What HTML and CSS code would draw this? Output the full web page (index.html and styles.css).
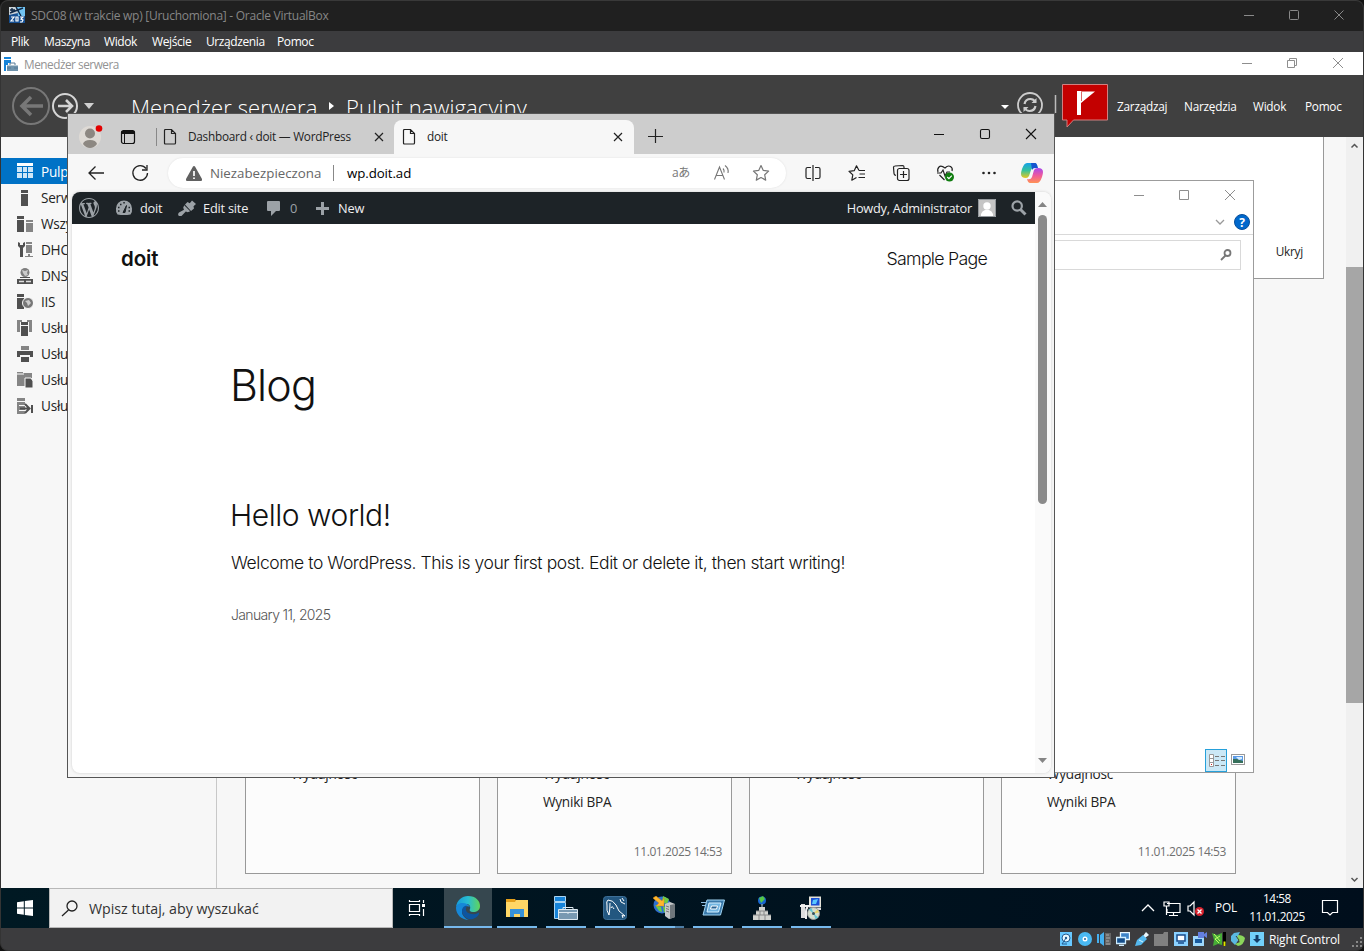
FILE: index.html
```html
<!DOCTYPE html>
<html lang="pl">
<head>
<meta charset="utf-8">
<title>SDC08 (w trakcie wp) [Uruchomiona] - Oracle VirtualBox</title>
<link rel="stylesheet" href="styles.css">
</head>
<body>
<div class="vm">
  <header class="vm-title">
    <svg class="vm-logo" viewBox="0 0 16 16"><rect width="16" height="16" fill="#164f91"/><path d="M8 0h8v9H9z" fill="#71c3f2"/><path d="M0 0h7l2 6-9 2z" fill="#cbd3d8"/><path d="M1 3h5M3 1v4M1 6l13-5M7 0l5 9" stroke="#102947" stroke-width="1.400"/><path d="M2 10h3l-3 4h3M7 10h2v4H7zM11 10h3l-2 2 2 1-1 2h-2" fill="none" stroke="#fff" stroke-width="1.200"/></svg>
    <span class="t vm-name">SDC08 (w trakcie wp) [Uruchomiona] - Oracle VirtualBox</span>
    <svg class="vm-controls" viewBox="0 0 110 12"><path d="M4 6.500h10M94.500 1.500l9 9M103.500 1.500l-9 9" stroke="#8a8a8a" fill="none"/><rect x="49.500" y="1.500" width="9" height="9" rx="1" fill="none" stroke="#8a8a8a"/></svg>
  </header>
  <nav class="vm-menu"><span>Plik</span><span>Maszyna</span><span>Widok</span><span>Wejście</span><span>Urządzenia</span><span>Pomoc</span></nav>

  <main class="guest">
    <section class="sm">
      <div class="sm-title">
        <svg class="sm-logo" viewBox="0 0 14 14"><path d="M0 0h7v2H0zM0 3h7v3H4v2H2v6H0z" fill="#1683d8"/><path d="M3 8.500h11V14H3z" fill="#6f93ac"/><path d="M6 8V6h5v2M3 11h4m3 0h4" stroke="#567b96" fill="none"/></svg>
        <span class="t">Menedżer serwera</span>
        <svg class="sm-controls" viewBox="0 0 110 12"><path d="M3 6.500h10M94 1l10 10M104 1L94 11M48.500 3.500h7v7h-7zM50.500 3V1.500h7v7H56" stroke="#8e8e8e" fill="none"/></svg>
      </div>
      <div class="sm-head">
        <svg class="sm-nav" viewBox="0 0 90 44"><circle cx="19" cy="22" r="18" fill="none" stroke="#777" stroke-width="2"/><path d="M31 22H10M19 13l-9 9 9 9" stroke="#777" stroke-width="3.500" fill="none"/><circle cx="53" cy="22" r="12" fill="none" stroke="#d5d5d5" stroke-width="2"/><path d="M46 22h13M54 16l6 6-6 6" stroke="#d5d5d5" stroke-width="2.600" fill="none"/><path d="M72 19h10l-5 6z" fill="#d0d0d0"/></svg>
        <h1 class="crumb crumb-a">Menedżer serwera</h1>
        <svg class="crumb-arrow" viewBox="0 0 6 10"><path d="M0 1l5 4-5 4z" fill="#fff"/></svg>
        <h1 class="crumb crumb-b">Pulpit nawigacyjny</h1>
        <svg class="sm-refresh" viewBox="0 0 60 30"><path d="M1 14h8l-4 4z" fill="#fff"/><circle cx="30" cy="14" r="12" fill="none" stroke="#ccc" stroke-width="1.800"/><path d="M24.500 13q1-5 6-5 3 0 5 3M35.500 15q-1 5-6 5-3 0-5-3" fill="none" stroke="#ccc" stroke-width="2.200"/><path d="M36.500 7v5h-5zM23.500 21v-5h5z" fill="#ccc"/><path d="M55.500 4v18" stroke="#bbb" stroke-width="1.500"/></svg>
        <svg class="sm-flag" viewBox="0 0 46 45"><path d="M.500 1.500h45v35.500h-34l-6.500 7v-7H.500z" fill="#c30000" stroke="#d18080"/><path d="M15 8h4v24h-4zM19 8.500h14L19 20z" fill="#fff"/><path d="M19.500 9v9" stroke="#c30000" stroke-width=".6"/></svg>
        <nav class="sm-menu"><span>Zarządzaj</span><span>Narzędzia</span><span>Widok</span><span>Pomoc</span></nav>
      </div>
      <div class="sm-body">
        <aside class="side">
          <div class="side-item on"><svg viewBox="0 0 16 16"><path d="M0 0h16v3H0z" fill="#fff"/><path d="M0 4h5v5H0zM6 4h4v5H6zM11 4h5v5h-5zM0 10h5v5H0zM6 10h4v5H6zM11 10h5v5h-5z" fill="#cfe6f7"/></svg><span>Pulpit nawigacyjny</span></div>
          <div class="side-item"><svg viewBox="0 0 16 16"><path d="M4 0h7v3H4zM4 4h7v12H4z" fill="#505050"/></svg><span>Serwer lokalny</span></div>
          <div class="side-item"><svg viewBox="0 0 16 16"><path d="M0 0h7v3H0zM0 4h7v12H0z" fill="#505050"/><path d="M9 4h7v2H9zM9 7h7v9H9z" fill="#858585"/></svg><span>Wszystkie serwery</span></div>
          <div class="side-item"><svg viewBox="0 0 16 16"><path d="M1 0v4l2 2v9h3V6l2-2V0L6 1v2H3V1z" fill="#505050"/><path d="M9 0h6v2H9zM9 3h6v8H9zM11 12h2v2h3v1H8v-1h3z" fill="#858585"/></svg><span>DHCP</span></div>
          <div class="side-item"><svg viewBox="0 0 16 16"><circle cx="8" cy="4.500" r="4.500" fill="#7e7e7e"/><path d="M5 2l3 1 3-1-1 3 1 2-3 1-2-3z" fill="#ccc"/><path d="M3 9h10v1H3zM0 11h16v5H0z" fill="#505050"/><path d="M2 13.500h5m2 0h5" stroke="#ddd" stroke-width="1.500"/></svg><span>DNS</span></div>
          <div class="side-item"><svg viewBox="0 0 16 16"><path d="M0 0h7v3H0zM0 4h7v11H0z" fill="#505050"/><circle cx="11" cy="9" r="5.500" fill="#777" stroke="#f8f8f8"/><path d="M8 7l4-1 2 3-3 3-1-3z" fill="#ccc"/></svg><span>IIS</span></div>
          <div class="side-item"><svg viewBox="0 0 16 16"><path d="M0 0h5v2H3v10H0zM10 0h5v12h-3V2h-2z" fill="#858585"/><path d="M4 2h7v3H4zM4 6h7v10H4z" fill="#505050"/></svg><span>Usługi AD</span></div>
          <div class="side-item"><svg viewBox="0 0 16 16"><path d="M4 0h8v4H4z" fill="#858585"/><path d="M0 5h16v6h-3V9H3v2H0zM4 11h8v5H4z" fill="#505050"/></svg><span>Usługi drukowania</span></div>
          <div class="side-item"><svg viewBox="0 0 16 16"><path d="M0 0h6v1h9v5H9v8H0z" fill="#858585"/><path d="M0 2h7" stroke="#fff"/><path d="M8 6h6l2 3v7H8z" fill="#505050" stroke="#f8f8f8"/></svg><span>Usługi plików</span></div>
          <div class="side-item"><svg viewBox="0 0 16 16"><path d="M0 0h8v3H0zM0 4h8v12H0z" fill="#858585"/><path d="M2 7h6v1H2zM2 12h6v1H2z" fill="#f8f8f8"/><path d="M3 10.500h9M8 6l4.500 4.500L8 15" stroke="#505050" stroke-width="2" fill="none"/><path d="M15 7v8" stroke="#505050" stroke-width="2"/></svg><span>Usługi pulpitu</span></div>
        </aside>
        <div class="dash">
          <div class="welcome"><span class="t">Ukryj</span></div>
          <div class="tiles">
            <article class="tile"><p>Wydajność</p></article>
            <article class="tile"><p>Wydajność</p><p>Wyniki BPA</p><time>11.01.2025 14:53</time></article>
            <article class="tile"><p>Wydajność</p></article>
            <article class="tile"><p>Wydajność</p><p>Wyniki BPA</p><time>11.01.2025 14:53</time></article>
          </div>
        </div>
        <div class="sbar"><svg viewBox="0 0 17 17"><path d="M5.500 10.500l3-3 3 3" fill="none" stroke="#555" stroke-width="1.500"/></svg><div class="sthumb"></div><svg class="sdown" viewBox="0 0 17 17"><path d="M5.500 7l3 3 3-3" fill="none" stroke="#555" stroke-width="1.500"/></svg></div>
      </div>
    </section>

    <section class="explorer">
      <svg class="ex-controls" viewBox="0 0 110 12"><path d="M3 6.500h10M94 1l10 10M104 1L94 11M48.500 1.500h9v9h-9z" stroke="#8e8e8e" fill="none"/></svg>
      <div class="ex-ribbon"><svg viewBox="0 0 36 16"><path d="M1 6l4 4 4-4" fill="none" stroke="#999" stroke-width="1.300"/><circle cx="27" cy="8" r="7.500" fill="#0068cc" stroke="#084f9b"/><text x="27" y="12.500" text-anchor="middle" fill="#fff" class="help">?</text></svg></div>
      <div class="ex-search"><svg viewBox="0 0 14 14"><circle cx="8.500" cy="5" r="3" fill="none" stroke="#777" stroke-width="1.800"/><path d="M6.500 7.500L2 12" stroke="#777" stroke-width="1.800"/></svg></div>
      <div class="ex-status"><svg viewBox="0 0 42 24"><rect x=".5" y=".5" width="21" height="22" fill="#cbe8f6" stroke="#26a0da"/><path d="M4.500 5.500h4v12h-4zM4.500 9.500h4M4.500 13.500h4" fill="#fff" stroke="#999"/><path d="M10 7.500h4m2 0h4M10 11.500h4m2 0h4M10 16.500h4m2 0h4" stroke="#777"/><path d="M6 15h1v1H6z" fill="#c22"/><rect x="26.500" y="5.500" width="13" height="10" fill="#fff" stroke="#999"/><path d="M28 7h10v7H28z" fill="#5c9be6"/><path d="M28 10h4l6 2v2H28z" fill="#36705b"/><path d="M31 8h6v2l-3 1z" fill="#d4edff"/></svg></div>
    </section>

    <section class="edge">
      <div class="tabs">
        <svg class="profile" viewBox="0 0 24 26"><circle cx="11" cy="14" r="11" fill="#dedad5"/><circle cx="11" cy="10.500" r="5" fill="#8d8882"/><path d="M4 21q1-4 7-4t7 4q-3 4-7 4t-7-4" fill="#8d8882"/><circle cx="20" cy="5.500" r="3.300" fill="#e30000"/></svg>
        <svg class="spaces" viewBox="0 0 16 16"><rect x="1.500" y="1.500" width="13" height="13" rx="2" fill="none" stroke="#111" stroke-width="1.200"/><path d="M1.500 2h13v3h-13z" fill="#111"/><path d="M4.500 5v9" stroke="#111"/></svg>
        <div class="tab tab-idle"><svg class="doc" viewBox="0 0 14 18"><path d="M2.500 1.500h6l4 4V15q0 1-1 1h-9q-1 0-1-1V2.500q0-1 1-1zM8.500 1.500v4h4" fill="none" stroke="#222" stroke-width="1.200"/></svg><span class="t">Dashboard ‹ doit — WordPress</span><svg class="x" viewBox="0 0 10 10"><path d="M1 1l8 8M9 1L1 9" stroke="#222" stroke-width="1.200"/></svg></div>
        <div class="tab tab-live"><svg class="doc" viewBox="0 0 14 18"><path d="M2.500 1.500h6l4 4V15q0 1-1 1h-9q-1 0-1-1V2.500q0-1 1-1zM8.500 1.500v4h4" fill="none" stroke="#222" stroke-width="1.200"/></svg><span class="t">doit</span><svg class="x" viewBox="0 0 10 10"><path d="M1 1l8 8M9 1L1 9" stroke="#222" stroke-width="1.200"/></svg></div>
        <svg class="plus" viewBox="0 0 16 16"><path d="M8.500 1v14M1 8.500h15" stroke="#222" stroke-width="1.200"/></svg>
        <svg class="edge-controls" viewBox="0 0 110 12"><path d="M3 6.500h10M95 1l10 10M105 1L95 11" stroke="#111" fill="none" stroke-width="1.100"/><rect x="49.500" y="1.500" width="9" height="9" rx="1.500" fill="none" stroke="#111" stroke-width="1.100"/></svg>
      </div>
      <div class="tools">
        <svg class="back" viewBox="0 0 18 18"><path d="M17 9H2M8.500 2.500L2 9l6.500 6.500" fill="none" stroke="#222" stroke-width="1.300"/></svg>
        <svg class="reload" viewBox="0 0 18 18"><path d="M15 4.500A7.300 7.300 0 1 0 16.500 9M16 1v5h-5" fill="none" stroke="#222" stroke-width="1.300"/></svg>
        <div class="omni">
          <svg class="warn" viewBox="0 0 16 15"><path d="M8 0q.7 0 1 .6L16 13q.3 2-1 2H1q-1.300 0-1-2L7 .6Q7.300 0 8 0z" fill="#606060"/><path d="M8 5v5m0 1.500V13" stroke="#fff" stroke-width="1.700"/></svg>
          <span class="t insecure">Niezabezpieczona</span><i></i><span class="t url">wp.doit.ad</span>
          <span class="translate">aあ</span>
          <svg class="read" viewBox="0 0 18 18"><path d="M1.500 15.500L6.500 3l5 12.500M3 11.500h7M10 4.500q1.500 1.500 1 4M12 1.500q4 3 3 7.500" fill="none" stroke="#777" stroke-width="1.100"/></svg>
          <svg class="star" viewBox="0 0 18 18"><path d="M9 1.500l2.300 4.900 5.300.7-3.900 3.700 1 5.300L9 13.500l-4.700 2.600 1-5.300L1.400 7.100l5.300-.7z" fill="none" stroke="#777" stroke-width="1.200" stroke-linejoin="round"/></svg>
        </div>
        <svg class="ti split" viewBox="0 0 18 18"><path d="M7 3.500H3.500q-1.500 0-1.500 1.500v8q0 1.500 1.500 1.500H7M11 3.500h3.500Q16 3.500 16 5v8q0 1.500-1.500 1.500H11M9 1v16" fill="none" stroke="#222" stroke-width="1.200"/></svg>
        <svg class="ti" viewBox="0 0 18 18"><path d="M11 6.500L8.500 1.800 6.200 6.700l-5.200.6 3.800 3.600-1 5.300 4.700-2.700M11 6.500h6M11.500 10H17M10.500 13.500H17" fill="none" stroke="#222" stroke-width="1.200" stroke-linejoin="round"/></svg>
        <svg class="ti" viewBox="0 0 18 18"><path d="M12 4V3q0-1.500-1.500-1.500L3 2Q1.500 2 1.500 3.500l.5 6Q2 11 4 11.500" fill="none" stroke="#222" stroke-width="1.200"/><rect x="5.500" y="4.500" width="11.500" height="12" rx="2" fill="none" stroke="#222" stroke-width="1.200"/><path d="M8 10.500h7M11.500 7v7" stroke="#222" stroke-width="1.200"/></svg>
        <svg class="ti" viewBox="0 0 18 18"><path d="M2 8q-1-3 1-5t6 1q3-3 5.500-1.500T16 7M1 9h4l2-3 2 6 2-4h3M3.500 11l5 5" fill="none" stroke="#222" stroke-width="1.200"/><circle cx="13.500" cy="13" r="4.500" fill="#107c10"/><path d="M11.300 13l1.600 1.600 2.900-3" fill="none" stroke="#fff" stroke-width="1.200"/></svg>
        <svg class="ti" viewBox="0 0 18 18"><g fill="#222"><circle cx="3.500" cy="9" r="1.300"/><circle cx="9" cy="9" r="1.300"/><circle cx="14.500" cy="9" r="1.300"/></g></svg>
        <svg class="copilot" viewBox="0 0 22 22"><defs><linearGradient id="ca" x2="0" y2="1"><stop stop-color="#15a1e9"/><stop offset=".5" stop-color="#36c39b"/><stop offset="1" stop-color="#e9c720"/></linearGradient><linearGradient id="cb" x2="0" y2="1"><stop stop-color="#a848ef"/><stop offset=".5" stop-color="#ef5a9b"/><stop offset="1" stop-color="#ff9255"/></linearGradient></defs><path d="M6 1h8q2 0 1 3l-1 2q-3-1-4 2l-2 6q-1 2-3 2-5 0-5-4 0-2 1-5 2-6 5-6z" fill="url(#ca)"/><path d="M10 1h4q2 0 3 5h-3q-2 0-3 2z" fill="#1555cf"/><path d="M17 6q5 0 5 4 0 2-1 5-2 6-5 6H9q-2 0-3-4 4 1 5-2l2-7q1-2 4-2z" fill="url(#cb)"/></svg>
      </div>
      <div class="page">
        <div class="page-main">
          <div class="wpbar">
            <svg class="wp-w" viewBox="0 0 20 20"><path d="M20 10c0-5.510-4.490-10-10-10C4.480 0 0 4.490 0 10c0 5.520 4.480 10 10 10 5.510 0 10-4.480 10-10zM7.780 15.370L4.370 6.220c.55-.02 1.170-.08 1.170-.08.5-.06.44-1.130-.06-1.110 0 0-1.450.11-2.370.11-.18 0-.37 0-.58-.01C4.120 2.690 6.870 1.110 10 1.110c2.330 0 4.450.87 6.050 2.340-.68-.11-1.650.39-1.650 1.580 0 .74.45 1.360.9 2.100.35.61.55 1.360.55 2.460 0 1.490-1.400 5-1.400 5l-3.030-8.370c.54-.02.82-.17.82-.17.5-.05.44-1.250-.06-1.220 0 0-1.440.12-2.380.12-.87 0-2.330-.12-2.330-.12-.5-.03-.56 1.200-.06 1.220l.92.08 1.260 3.410zM17.410 10c.24-.64.74-1.870.43-4.250.7 1.290 1.050 2.710 1.050 4.250 0 3.290-1.730 6.240-4.400 7.780.97-2.590 1.940-5.200 2.920-7.780zM6.100 18.090C3.120 16.650 1.110 13.530 1.110 10c0-1.300.23-2.480.72-3.590C3.250 10.300 4.670 14.200 6.100 18.090zm4.030-6.630l2.580 6.980c-.86.29-1.760.45-2.710.45-.79 0-1.570-.11-2.290-.33.81-2.380 1.620-4.740 2.420-7.100z" fill="#9ca2a7"/></svg>
            <svg class="wp-i" viewBox="0 0 18 16"><path d="M2.500 14.500q-2-2-1.500-6a8 8 0 0 1 16 0q.5 4-1.500 6-6.500 1-13 0z" fill="#9ca2a7"/><path d="M8 12.500l3.500-7-1.500 7z" fill="#1d2327" stroke="#1d2327"/><path d="M8.300 2.800h1.500M5 4.500h1.500M3 7.500h1.500M3 11h1.500M13.500 7.500H15M13.500 11H15" stroke="#1d2327" stroke-width="1.500"/></svg>
            <span class="t w-doit">doit</span>
            <svg class="wp-i brush" viewBox="0 0 18 16"><path d="M7 4.500L9.500 2l2.300 1.200L14 .5 18 4l-2.500 2.300.5 2.200-3 2.500z" fill="#9ca2a7"/><path d="M6.200 5.300l6 6-2.400.9-2-.7L3.500 16Q1.500 17 .5 15.500T1 12.500L6 9.800l-.8-2z" fill="#9ca2a7"/></svg>
            <span class="t w-edit">Edit site</span>
            <svg class="wp-i bubble" viewBox="0 0 18 16"><path d="M4 1h10q1 0 1 1v8q0 1-1 1h-3l-5 5v-5H3q-1 0-1-1V2q0-1 1-1z" fill="#9ca2a7"/></svg>
            <span class="t w-zero">0</span>
            <svg class="wp-i add" viewBox="0 0 18 16"><path d="M7 2h3v5h5v3h-5v5H7v-5H2V7h5z" fill="#9ca2a7"/></svg>
            <span class="t w-new">New</span>
            <span class="t howdy">Howdy, Administrator</span>
            <svg class="avatar" viewBox="0 0 18 18"><path d="M0 0h18v18H0z" fill="#c5c5c5"/><circle cx="9" cy="7" r="3.700" fill="#fff"/><path d="M3 17v-2q1-3 4-4h4q3 1 4 4v2z" fill="#fff"/><path d="M.5.5h17v17H.5z" fill="none" stroke="#93989c"/></svg>
            <svg class="wsearch" viewBox="0 0 16 16"><circle cx="6.200" cy="6" r="4.700" fill="none" stroke="#9ca2a7" stroke-width="2.200"/><path d="M9.500 9.500l5 5" stroke="#9ca2a7" stroke-width="3"/></svg>
          </div>
          <div class="site-head"><b>doit</b><span>Sample Page</span></div>
          <h2 class="blog"><span>Blog</span></h2>
          <h3 class="post"><span>Hello world!</span></h3>
          <p class="excerpt"><span>Welcome to WordPress. This is your first post. Edit or delete it, then start writing!</span></p>
          <p class="date"><span>January 11, 2025</span></p>
        </div>
        <div class="pbar"><svg viewBox="0 0 15 12"><path d="M3 9l4.500-5L12 9z" fill="#858585"/></svg><div class="pthumb"></div><svg class="sdown" viewBox="0 0 15 12"><path d="M3 4l4.500 5L12 4z" fill="#858585"/></svg></div>
      </div>
    </section>

    <footer class="taskbar">
      <div class="start"><svg viewBox="0 0 16 16"><path d="M0 2.200L6.800 1.200V7.500H0zM7.800 1L16 0v7.500H7.800zM0 8.500h6.800v6.300L0 13.800zM7.800 8.500H16V16l-8.200-1z" fill="#fff"/></svg></div>
      <div class="find"><svg viewBox="0 0 17 17"><circle cx="11" cy="6" r="5" fill="none" stroke="#222" stroke-width="1.300"/><path d="M7.500 10L1 16" stroke="#222" stroke-width="1.300"/></svg><span class="t">Wpisz tutaj, aby wyszukać</span></div>
      <div class="taskview"><svg viewBox="0 0 18 16"><path d="M1.500 4.500h10v7h-10zM1.500 0v1.500h10V0M1.500 16v-1.500h10V16M15.500 0v3M15.500 9v7" fill="none" stroke="#fff" stroke-width="1.200"/><path d="M14 4h3v3h-3z" fill="#fff"/></svg></div>
      <div class="apps">
        <div class="app on"><svg viewBox="0 0 24 24"><defs><linearGradient id="ea" x2="1"><stop stop-color="#159bd9"/><stop offset=".5" stop-color="#28bdd2"/><stop offset="1" stop-color="#61d45a"/></linearGradient></defs><circle cx="12" cy="12" r="12" fill="#36474f"/><path d="M0 11C1 4 6 0 12 0c8 0 12 5 12 10 0 4-3 6-7 6-3 0-4-1.500-3-3 1-3-1-5-4-5-5 0-9 1-10 3z" fill="url(#ea)"/><path d="M0 12c0-6 11-7 14-1-4-2-8 1-8 5 0 3 3 7 7 8C6 24 0 19 0 12z" fill="#1688d8"/><path d="M10.500 9.500C6 10 5 15 7 18.500 9 22 13 24 17 23c3-1 5-3 6-5 .5-1-.5-1.500-1-1-5 3-13 0-12-4 0-1.500 1-2 .5-3.500z" fill="#0d55a0"/></svg></div>
        <div class="app"><svg viewBox="0 0 24 24"><path d="M1 3h9l2 3H1z" fill="#e5a01b"/><path d="M1 6l9 0 1-2h12v17H1z" fill="#ffd766"/><path d="M5 13h14v8h-4v-3H9v3H5z" fill="#3792d9"/></svg></div>
        <div class="app"><svg viewBox="0 0 24 24"><path d="M.5.500h11v5h-11zM.5 6.500h11v16h-11z" fill="#1683d8" stroke="#bde4ff" stroke-width=".9"/><path d="M4.500 13.500h19v10h-19z" fill="#7899b1" stroke="#dce8ef"/><path d="M9 13v-1.500h10V13M5 16.500h18M14 16v2" stroke="#dce8ef" fill="none"/></svg></div>
        <div class="app"><svg viewBox="0 0 24 24"><rect x=".5" y=".5" width="23" height="23" rx="3" fill="#235780" stroke="#3d6f97"/><path d="M6 19q-3-5-2-9-1-5 1-6 5 0 8 5l3 6 6 5-3-.5 1 2.500M7 7q0 6-1 12M8 12q1-3 3 1M17 3l1 3 4 2M19 2l2 3" fill="none" stroke="#fff"/></svg></div>
        <div class="app multi"><svg viewBox="0 0 24 24"><circle cx="10" cy="9" r="8.500" fill="#2f6fd0"/><path d="M11 0l6 3-2 5-5-2zM3 9l6 2 1 5-3-1zM11 10l4 2-3 5z" fill="#6dcb45"/><path d="M1 2l3-2 6 5 2-3v8H4l3-3-5-4z" fill="#ffb72e" stroke="#d98a10" stroke-width=".5"/><path d="M13 8l5-2 5 2v13l-6 2-4-3z" fill="#c6c9ca"/><path d="M18 9l5-1v13l-5 2z" fill="#6f777c"/><path d="M14 10l3 1M14 12.500l3 1M14 15l3 1" stroke="#777"/></svg></div>
        <div class="app"><svg viewBox="0 0 24 24"><path d="M6 4h17.500l-4 15H2z" fill="#3979aa" stroke="#a1d5f3"/><path d="M8 7h12l-2.500 9H6z" fill="#72b5e1" stroke="#d4efff"/><path d="M10.500 10h6l-1 3h-6z" fill="#296596" stroke="#fff"/><path d="M0 6.500h5M1 9.500h3" stroke="#91bee1"/></svg></div>
        <div class="app"><svg viewBox="0 0 24 24"><circle cx="12" cy="4.500" r="4" fill="#1766d0"/><path d="M9 2l4-2 2 3-4 4z" fill="#55c746"/><path d="M12 8v6" stroke="#c8d9e5"/><path d="M9 11h6v4H9zM6 15h12v4H6zM3 19h18v5H3z" fill="#d2d2ce"/><path d="M6 15h12M3 19h18M10 15v4M14 15v4M9 19v5M15 19v5" stroke="#888"/></svg></div>
        <div class="app"><svg viewBox="0 0 24 24"><path d="M10 .5h12v11H10z" fill="#e4e2d8"/><path d="M12 2h8.500v7.500H12z" fill="#1b50d4"/><path d="M14 4l5-1-2 5h-4z" fill="#59c8ff"/><path d="M14 12h8v2h-8z" fill="#ddd"/><path d="M2 8h4v14H2z" fill="#ddd"/><path d="M1 10h10M9 11q-2 1-2 5v7" stroke="#eee" stroke-width="2" fill="none"/><circle cx="14.500" cy="17.500" r="6" fill="#d4ddcd" stroke="#999"/><path d="M14.500 17.500l-5-4 3-1.500zM14.500 17.500l5 4-3 1.500z" fill="#65c7d4"/><path d="M14.500 17.500l4-4 1.500 3z" fill="#e7d466"/><circle cx="14.500" cy="17.500" r="1.500" fill="#37515b"/></svg></div>
      </div>
      <svg class="tray" viewBox="0 0 68 20"><path d="M3 13l6-6 6 6" fill="none" stroke="#fff" stroke-width="1.300"/><path d="M28 5.500h13v9H28V11M34.500 15v2M30 17.500h9M25 4h5v4h-5zM27.500 8v9" fill="none" stroke="#fff" stroke-width="1.200"/><path d="M49 8h2l4-4v13l-4-4h-2z" fill="none" stroke="#fff" stroke-width="1.200"/><circle cx="60.500" cy="13.500" r="4.500" fill="#d8222d"/><path d="M58.500 11.500l4 4M62.500 11.500l-4 4" stroke="#fff" stroke-width="1.300"/></svg>
      <span class="t lang">POL</span>
      <div class="clock"><span>14:58</span><span>11.01.2025</span></div>
      <svg class="note" viewBox="0 0 18 18"><path d="M1.500 1.500h15v12h-5L9 16l-2.500-2.500h-5z" fill="none" stroke="#fff" stroke-width="1.200"/></svg>
    </footer>
  </main>

  <footer class="vm-status">
    <svg viewBox="0 0 14 14"><rect x="1" width="12" height="14" fill="#68c8ff"/><circle cx="7" cy="6" r="4" fill="#e8f9ff" stroke="#235c91"/><path d="M7 6l-4 6h5" stroke="#235c91" fill="none"/><circle cx="7" cy="6" r="1.200" fill="#235c91"/></svg>
    <svg viewBox="0 0 14 14"><circle cx="7" cy="7" r="7" fill="#4ab9f2"/><circle cx="7" cy="7" r="2.500" fill="#fff"/><circle cx="7" cy="7" r="1" fill="#246293"/></svg>
    <svg viewBox="0 0 14 14"><path d="M0 2h2v9H0zM3 3l4-3v14l-4-3z" fill="#45b0ef"/><path d="M8 1h6v12H8z" fill="#666"/><path d="M9 3h3M9 6h4M9 9h3M9 12h4" stroke="#aaa"/></svg>
    <svg viewBox="0 0 14 14"><path d="M4.500.500h9v7h-9z" fill="#3c83c8" stroke="#e9f8ff" stroke-width="1.300"/><path d="M.5 5.500h9v6h-9zM3 13.500h5" fill="#174f8b" stroke="#cfeeff" stroke-width="1.300"/></svg>
    <svg viewBox="0 0 14 14"><path d="M8 4l3-4 3 3-4 3z" fill="#e9f6fc"/><path d="M8 3l4 4-6 6-6 1 2-6z" fill="#54b8ee"/><path d="M4 8l4 2" stroke="#d7f5ff"/></svg>
    <svg viewBox="0 0 14 14"><path d="M0 2h9l1-2h4v14H0z" fill="#818181"/></svg>
    <svg viewBox="0 0 14 14"><path d="M0 0h14v14H0z" fill="#8bd1ff"/><path d="M3 3h8v6H3zM4 11h6" fill="#fff" stroke="#184b8b" stroke-width="1.500"/></svg>
    <svg viewBox="0 0 14 14"><path d="M0 4h11v10H0z" fill="#9fd8fb"/><path d="M2 7h7v4H2z" fill="#185a9e"/><path d="M5 0h6v6H5zM11 2l3-2v6l-3-2z" fill="#647fe0"/></svg>
    <svg viewBox="0 0 14 14"><path d="M0 1l5 2 5-2v12l-4-1-5 2 1-6z" fill="#47ac37"/><path d="M2 2l6 7M8 4l-5 3 4 4" stroke="#c0ff66" fill="none"/><path d="M11 0h3v14h-3z" fill="#000"/><path d="M11.500 9.500h2V14h-2z" fill="#e2e600"/></svg>
    <svg viewBox="0 0 14 14"><path d="M3 1l6-1-2 4 1 4-4 5-4-4 0-5z" fill="#5ab8e2"/><path d="M7 3q5 0 7 3-1 7-7 8l-3-2 5-2-3-3z" fill="#8bd65b"/><path d="M5 4l3 4-2 3" stroke="#3c3c3e" fill="none"/></svg>
    <svg viewBox="0 0 14 14"><path d="M0 0h14v14H0z" fill="#72d0fa"/><path d="M5.500 3h3v4H11l-4 4-4-4h2.500z" fill="#143d68"/></svg>
    <span class="t">Right Control</span>
    <svg class="grip" viewBox="0 0 13 13"><path d="M10 1h2v2h-2zM6 5h2v2H6zM10 5h2v2h-2zM2 9h2v2H2zM6 9h2v2H6zM10 9h2v2h-2z" fill="#888"/></svg>
  </footer>
</div>
</body>
</html>
```

FILE: styles.css
```css
* { box-sizing: border-box; margin: 0; padding: 0; }
body { width: 1364px; height: 951px; overflow: hidden; background: #111; font-family: "Open Sans", "Noto Sans", sans-serif; font-size: 11.800px; letter-spacing: -.25px; color: #222; }
svg { display: block; flex: none; }
span, p, time, h1 { white-space: nowrap; }
.vm { width: 1364px; height: 951px; border: 1px solid #343434; border-top-color: #393939; border-radius: 8px; overflow: hidden; display: flex; flex-direction: column; background: #3c3c3e; }

.vm-title { height: 30px; background: #202020; display: flex; align-items: center; padding-left: 8px; padding-bottom: 2px; color: #868686; }
.vm-logo { width: 16px; height: 16px; margin-right: 6px; }
.vm-name { flex: 1; font-size: 12px; letter-spacing: -.26px; }
.vm-controls { width: 110px; height: 12px; margin-right: 13px; }
.vm-menu { height: 21px; background: #3c3c3e; color: #fff; display: grid; grid-template-columns: 33px 60px 48px 54px 71px 60px; align-items: center; padding-left: 10px; font-size: 12px; letter-spacing: -.4px; }

.guest { height: 876px; position: relative; flex: none; display: flex; flex-direction: column; }
.sm { height: 836px; display: flex; flex-direction: column; background: #f7f7f7; }
.sm-title { height: 23px; background: #fff; display: flex; align-items: center; color: #939393; padding-left: 3px; }
.sm-logo { width: 14px; height: 14px; margin-right: 6px; }
.sm-title .t { flex: 1; letter-spacing: -.48px; }
.sm-controls { width: 110px; height: 12px; margin-right: 14px; margin-bottom: 2px; }
.sm-head { height: 62px; background: #404040; display: flex; align-items: flex-start; }
.sm-nav { width: 90px; height: 44px; margin: 9px 0 0 11px; }
.crumb { font-weight: 300; font-size: 22px; letter-spacing: .1px; line-height: 30px; color: #fff; margin-top: 17px; }
.crumb-a { width: 198px; margin-left: 29px; }
.crumb-arrow { width: 6px; height: 10px; margin-top: 26px; margin-right: 11px; }
.crumb-b { width: 654px; }
.sm-refresh { width: 60px; height: 30px; margin-top: 16px; }
.sm-flag { width: 46px; height: 45px; margin: 8px 0 0 2px; }
.sm-menu { display: grid; grid-template-columns: 67px 69px 52px 50px; color: #fff; margin: 23px 0 0 9px; line-height: 17px; }
.sm-body { height: 751px; display: flex; }
.side { width: 216px; border-right: 1px solid #c8c8c8; padding-top: 21px; }
.side-item { height: 26px; display: flex; align-items: center; gap: 8px; padding: 1px 0 0 16px; font-size: 13.600px; }
.side-item svg { width: 16px; height: 16px; }
.side-item.on { background: #0072c6; color: #fff; }
.side-item.on svg { margin-bottom: 2px; }
.dash { width: 1129px; display: flex; flex-direction: column; justify-content: space-between; padding-bottom: 14px; }
.welcome { height: 142px; width: 1079px; margin-left: 28px; background: #fff; border: solid #999; border-width: 0 1px 1px; display: flex; align-items: flex-end; justify-content: flex-end; padding: 0 20px 18px; line-height: 18px; }
.tiles { display: flex; gap: 17px; padding-left: 28px; }
.tile { width: 235px; height: 120px; border: 1px solid #999; background: #fcfcfc; padding: 9px 9px 0 45px; display: flex; flex-direction: column; font-size: 13.600px; }
.tile p { line-height: 20px; margin-bottom: 8px; }
.tile time { align-self: flex-end; margin-top: 23px; line-height: 18px; font-size: 12px; letter-spacing: -.42px; color: #707070; }
.sbar { width: 17px; background: #f0f0f0; display: flex; flex-direction: column; }
.sbar svg { width: 17px; height: 17px; }
.sthumb { height: 436px; margin-top: 113px; background: #a6a6a6; }
.sdown { margin-top: auto; }

.explorer { position: absolute; left: 653px; top: 128px; width: 600px; height: 593px; background: #fff; border: 1px solid #9c9c9c; display: flex; flex-direction: column; align-items: flex-end; }
.ex-controls { width: 110px; height: 12px; margin: 8px 12px 0 0; }
.ex-ribbon { width: 100%; height: 34px; border-bottom: 1px solid #d9d9d9; display: flex; justify-content: flex-end; align-items: flex-start; padding-top: 13px; }
.ex-ribbon svg { width: 36px; height: 16px; margin-right: 2px; }
.help { font-size: 12px; font-weight: 700; letter-spacing: 0; }
.ex-search { width: 560px; height: 30px; border: 1px solid #d9d9d9; margin: 5px 12px 0 0; display: flex; justify-content: flex-end; align-items: center; padding-right: 7px; }
.ex-search svg { width: 14px; height: 14px; }
.ex-status { margin: auto 6px -1px 0; }
.ex-status svg { width: 42px; height: 24px; }

.edge { position: absolute; left: 66px; top: 61px; width: 988px; height: 665px; border: 1px solid #555; background: #f7f7f7; display: flex; flex-direction: column; }
.tabs { height: 40px; background: #cdcdcd; display: flex; align-items: center; }
.profile { width: 24px; height: 26px; margin: 4px 0 0 11px; }
.spaces { width: 16px; height: 16px; margin: 6px 0 0 17px; }
.tab { display: flex; align-items: center; height: 34px; align-self: flex-end; }
.tab .t { flex: 1; padding-left: 11px; margin-top: -2px; }
.tab-idle { width: 238px; height: 18px; margin-left: 20px; padding: 0 10px 0 6px; border-left: 1px solid #888; margin-bottom: 8px; }
.tab-live { width: 240px; padding: 0 11px 0 8px; background: #f7f7f7; border-radius: 8px 8px 0 0; }
.doc { width: 14px; height: 18px; }
.x { width: 10px; height: 10px; }
.plus { width: 16px; height: 16px; margin: 4px 0 0 13px; }
.edge-controls { width: 110px; height: 12px; margin-left: auto; margin-right: 13px; }
.tools { height: 38px; display: flex; align-items: center; }
.back { width: 18px; height: 18px; margin-left: 19px; }
.reload { width: 18px; height: 18px; margin-left: 26px; }
.omni { width: 618px; height: 30px; border-radius: 15px; background: #fff; margin-left: 19px; display: flex; align-items: center; padding-left: 18px; font-size: 13.300px; letter-spacing: 0; box-shadow: 0 0 2px #ddd; }
.warn { width: 16px; height: 15px; margin-right: 8px; }
.insecure { width: 123px; color: #666; }
.omni i { width: 1px; height: 16px; background: #888; margin-right: 13px; }
.url { width: 325px; color: #000; letter-spacing: -.1px; }
.translate { width: 41px; font-family: "Open Sans", "Noto Sans CJK JP", sans-serif; font-size: 12px; letter-spacing: -.5px; color: #777; line-height: 16px; }
.read { width: 18px; height: 18px; margin-right: 21px; }
.star { width: 18px; height: 18px; }
.ti { width: 18px; height: 18px; margin-right: 26px; }
.split { margin-left: 18px; }
.copilot { width: 22px; height: 22px; margin-left: -3px; }
.page { width: 979px; height: 581px; margin-left: 4px; background: #fff; border-radius: 8px; overflow: hidden; display: flex; box-shadow: 0 0 3px #ccc; }
.page-main { width: 963px; font-family: Inter, sans-serif; color: #111; }
.wpbar { height: 32px; background: #1d2327; color: #f0f0f1; display: flex; align-items: center; padding-left: 7px; font: 12.800px "Open Sans", sans-serif; letter-spacing: -.22px; }
.wp-w { width: 20px; height: 20px; margin-right: 16px; }
.wp-i { width: 18px; height: 16px; margin-right: 7px; }
.w-doit { width: 38px; }
.w-edit { width: 62px; }
.w-zero { width: 24px; color: #9ca2a7; }
.add { margin-right: 6px; }
.howdy { margin-left: auto; margin-right: 6px; letter-spacing: -.26px; }
.avatar { width: 18px; height: 18px; margin-right: 15px; }
.wsearch { width: 16px; height: 16px; margin-right: 8px; }
.site-head { height: 70px; display: flex; justify-content: space-between; align-items: center; padding: 0 48px 2px 49px; font-weight: 300; font-size: 17.800px; letter-spacing: -.75px; }
.site-head b { font-weight: 600; font-size: 20.500px; letter-spacing: -.1px; }
.blog { margin: 66px 0 0 158px; font-weight: 300; font-size: 43px; line-height: 50px; letter-spacing: -.8px; }
.post { margin: 87px 0 0 158px; font-weight: 300; font-size: 30px; line-height: 36px; letter-spacing: -.45px; }
.excerpt { margin: 18px 0 0 159px; font-weight: 300; font-size: 17.500px; line-height: 24px; letter-spacing: -.435px; }
.date { margin: 31px 0 0 159px; font-weight: 300; font-size: 14px; line-height: 18px; letter-spacing: -.65px; color: #555; }
.pbar { width: 16px; background: #fafafa; display: flex; flex-direction: column; padding: 6px 0; }
.pbar svg { width: 15px; height: 12px; }
.pbar .sdown { margin-bottom: 1px; }
.pthumb { width: 9px; height: 289px; margin: 5px 0 0 3px; border-radius: 5px; background: #8b8b8b; }

.taskbar { height: 40px; background: linear-gradient(90deg, #001923, #000e1c); display: flex; align-items: center; color: #fff; }
.start { width: 48px; display: flex; justify-content: center; }
.start svg { width: 16px; height: 16px; }
.find { width: 344px; height: 40px; background: #f2f2f2; border: 1px solid #b8b8b8; display: flex; align-items: center; padding-left: 11px; gap: 11px; color: #333; font-size: 14.200px; letter-spacing: 0; }
.find svg { width: 17px; height: 17px; }
.taskview { width: 51px; padding-left: 15px; }
.taskview svg { width: 18px; height: 16px; }
.apps { display: flex; gap: 1px; width: 392px; }
.app { width: 48px; height: 40px; padding-top: 8px; display: flex; flex-direction: column; align-items: center; justify-content: space-between; }
.app svg { width: 24px; height: 24px; }
.app::after { content: ""; width: 40px; height: 2px; background: #76b9ed; }
.app.on { background: #36474f; }
.app.on::after { width: 48px; }
.app.multi::after { background: linear-gradient(90deg, #76b9ed 31px, #4d7ea6 31px); }
.tray { width: 68px; height: 20px; margin-left: 303px; }
.lang { width: 34px; margin: -2px 0 0 8px; letter-spacing: -.1px; }
.clock { width: 56px; line-height: 18px; margin-top: -2px; display: flex; flex-direction: column; align-items: center; letter-spacing: -.45px; }
.note { width: 18px; height: 18px; margin-left: 16px; }

.vm-status { flex: 1; display: flex; align-items: center; gap: 5.100px; padding-left: 1058px; color: #fff; }
.vm-status svg { width: 14px; height: 14px; }
.vm-status .t { width: 78px; font-size: 12px; letter-spacing: -.18px; }
.vm-status .grip { width: 13px; height: 13px; margin-top: 6px; }
```
